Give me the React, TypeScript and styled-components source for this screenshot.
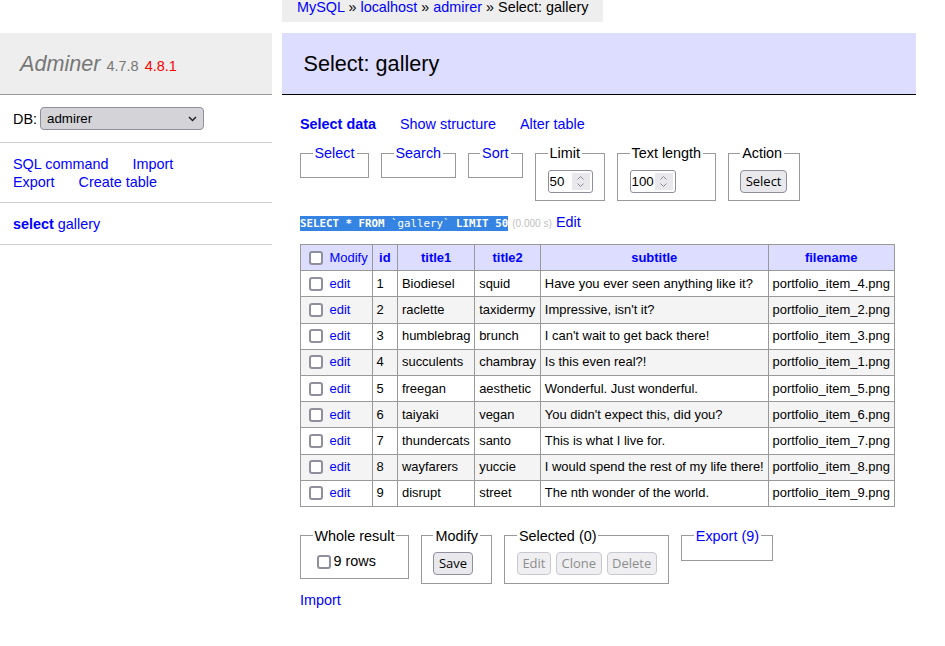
import React from "react";
import styled, { createGlobalStyle } from "styled-components";

const GlobalStyle = createGlobalStyle`
  body {
    margin: 0;
    background: #fff;
    color: #000;
    font: 14.4px/18px "Liberation Sans", Arial, Helvetica, sans-serif;
  }
  a {
    color: blue;
    text-decoration: none;
  }
`;

const Page = styled.div`
  display: flex;
  align-items: flex-start;
`;

const Menu = styled.nav`
  width: 272px;
  flex-shrink: 0;
  margin-top: 33px;
`;

const Logo = styled.h1`
  margin: 0;
  padding: 17px 20px;
  font-size: 21.6px;
  line-height: 27px;
  font-weight: normal;
  color: #777;
  background: #eee;
  border-bottom: 1px solid #999;
`;

const LogoName = styled.a`
  color: #777;
  font-style: italic;
`;

const Version = styled.span`
  font-size: 14.5px;
  line-height: 18px;
  color: #777;
`;

const NewVersion = styled.a`
  font-size: 14.5px;
  line-height: 18px;
  color: red;
`;

const MenuBlock = styled.div`
  padding: 11.5px 13px;
  border-bottom: 1px solid #ccc;
`;

const DbRow = styled(MenuBlock)`
  display: flex;
  align-items: center;
  gap: 3px;
  padding: 12px 13px 12px;
`;

const SelectBox = styled.div`
  box-sizing: border-box;
  width: 164px;
  height: 23px;
  padding: 1px 6px 0;
  display: flex;
  align-items: center;
  justify-content: space-between;
  border: 1px solid #8f8f9d;
  border-radius: 4px;
  background: #d3d3d8;
  font-size: 13.33px;
`;

const LinkLine = styled.div`
  display: flex;
  gap: 24px;
`;

const Strong = styled.a`
  font-weight: bold;
`;

const Main = styled.main`
  width: 634px;
  flex-shrink: 0;
  margin-left: 10px;
  padding-right: 20px;
  display: flex;
  flex-direction: column;
`;

const Breadcrumb = styled.div`
  align-self: flex-start;
  height: 22px;
  padding: 0 15px;
  line-height: 14px;
  background: #eee;
  white-space: nowrap;
`;

const Heading = styled.h2`
  margin: 11px 0 0;
  padding: 17px 21.6px;
  font-size: 21.6px;
  line-height: 27px;
  font-weight: normal;
  color: #000;
  background: #ddf;
  border-bottom: 1px solid #000;
`;

const Content = styled.div`
  padding: 20px 0 20px 18px;
`;

const Tabs = styled.p`
  margin: 0;
  display: flex;
  gap: 24px;
`;

const FieldRow = styled.div<{ $top: number }>`
  display: flex;
  align-items: flex-start;
  gap: 12px;
  margin-top: ${(p) => p.$top}px;
`;

const Fieldset = styled.fieldset`
  margin: 0;
  min-width: 0;
  padding: 7.5px 11.5px;
  border: 1px solid #999;
`;

const Legend = styled.legend`
  padding: 0 2px;
  line-height: 18px;
`;

const NumberField = styled.span<{ $width: number }>`
  box-sizing: border-box;
  display: inline-flex;
  width: ${(p) => p.$width}px;
  height: 23px;
  border: 1px solid #8f8f9d;
  border-radius: 3px;
  background: #fff;
  font-size: 13.33px;
  vertical-align: top;
`;

const NumberValue = styled.span`
  flex: 1;
  padding-left: 1px;
  line-height: 21px;
  overflow: hidden;
  white-space: nowrap;
`;

const Spinner = styled.span`
  width: 18px;
  margin: 2px 2px 2px 0;
  background: #e9e9ed;
  display: flex;
  flex-direction: column;
  align-items: center;
  justify-content: center;
  gap: 3px;
`;

const Button = styled.button`
  box-sizing: border-box;
  height: 23px;
  padding: 0 4.5px;
  border: 1px solid #8f8f9d;
  border-radius: 4px;
  background: #e9e9ed;
  color: #000;
  font: 13px/21px "Open Sans", sans-serif;

  &:disabled {
    border-color: #c8c8d0;
    background: #efeff1;
    color: #8d8d8d;
  }
`;

const ButtonGroup = styled.div`
  display: flex;
  gap: 5px;
`;

const SqlLine = styled.p`
  margin: 11.5px 0 0;
`;

const Query = styled.code`
  padding: 1px 0;
  background: #3584e4;
  color: #fff;
  font: 10.8px "DejaVu Sans Mono", monospace;
`;

const Time = styled.span`
  font-size: 10.08px;
  color: #c0c0c0;
`;

const Table = styled.table`
  margin-top: 11.5px;
  border-collapse: collapse;
  font-size: 12.96px;
  line-height: 20px;
  white-space: nowrap;

  td,
  th {
    border: 1px solid #999;
    padding: 2.6px 3.9px;
    text-align: left;
  }

  thead td,
  thead th {
    background: #ddf;
  }

  thead th {
    text-align: center;
    padding: 2.6px 6.5px;
  }

  tbody tr:nth-child(even) {
    background: #f4f4f4;
  }
`;

const Checkbox = styled.input.attrs({ type: "checkbox" })`
  appearance: none;
  box-sizing: border-box;
  width: 14px;
  height: 14px;
  margin: 0 3px 0 4px;
  border: 2px solid #8f8f9d;
  border-radius: 3px;
  background: #fff;
  vertical-align: -3px;
`;

const Footer = styled.p`
  margin: 7px 0 0;
`;

const Chevron = ({ up }: { up?: boolean }) => (
  <svg width="7" height="4" viewBox="0 0 7 4">
    <polyline
      points={up ? "0.5,3.5 3.5,0.5 6.5,3.5" : "0.5,0.5 3.5,3.5 6.5,0.5"}
      fill="none"
      stroke="#8a8a8a"
      strokeWidth="1"
    />
  </svg>
);

const rows = [
  ["1", "Biodiesel", "squid", "Have you ever seen anything like it?", "portfolio_item_4.png"],
  ["2", "raclette", "taxidermy", "Impressive, isn't it?", "portfolio_item_2.png"],
  ["3", "humblebrag", "brunch", "I can't wait to get back there!", "portfolio_item_3.png"],
  ["4", "succulents", "chambray", "Is this even real?!", "portfolio_item_1.png"],
  ["5", "freegan", "aesthetic", "Wonderful. Just wonderful.", "portfolio_item_5.png"],
  ["6", "taiyaki", "vegan", "You didn't expect this, did you?", "portfolio_item_6.png"],
  ["7", "thundercats", "santo", "This is what I live for.", "portfolio_item_7.png"],
  ["8", "wayfarers", "yuccie", "I would spend the rest of my life there!", "portfolio_item_8.png"],
  ["9", "disrupt", "street", "The nth wonder of the world.", "portfolio_item_9.png"],
];

const columns = ["id", "title1", "title2", "subtitle", "filename"];

const NumberInput = ({ value, width }: { value: string; width: number }) => (
  <NumberField $width={width}>
    <NumberValue>{value}</NumberValue>
    <Spinner>
      <Chevron up />
      <Chevron />
    </Spinner>
  </NumberField>
);

export default function App() {
  return (
    <>
      <GlobalStyle />
      <Page>
        <Menu>
          <Logo>
            <LogoName href="#">Adminer</LogoName> <Version>4.7.8</Version>{" "}
            <NewVersion href="#">4.8.1</NewVersion>
          </Logo>
          <DbRow>
            <span>DB:</span>
            <SelectBox>
              <span>admirer</span>
              <svg width="9" height="6" viewBox="0 0 9 6">
                <polyline points="1,1 4.5,4.5 8,1" fill="none" stroke="#222" strokeWidth="1.5" />
              </svg>
            </SelectBox>
          </DbRow>
          <MenuBlock>
            <LinkLine>
              <a href="#">SQL command</a>
              <a href="#">Import</a>
            </LinkLine>
            <LinkLine>
              <a href="#">Export</a>
              <a href="#">Create table</a>
            </LinkLine>
          </MenuBlock>
          <MenuBlock>
            <Strong href="#">select</Strong> <a href="#">gallery</a>
          </MenuBlock>
        </Menu>

        <Main>
          <Breadcrumb>
            <a href="#">MySQL</a> » <a href="#">localhost</a> » <a href="#">admirer</a> » Select:
            gallery
          </Breadcrumb>
          <Heading>Select: gallery</Heading>
          <Content>
            <Tabs>
              <Strong href="#">Select data</Strong>
              <a href="#">Show structure</a>
              <a href="#">Alter table</a>
            </Tabs>

            <FieldRow $top={11}>
              <Fieldset>
                <Legend>
                  <a href="#">Select</a>
                </Legend>
              </Fieldset>
              <Fieldset>
                <Legend>
                  <a href="#">Search</a>
                </Legend>
              </Fieldset>
              <Fieldset>
                <Legend>
                  <a href="#">Sort</a>
                </Legend>
              </Fieldset>
              <Fieldset>
                <Legend>Limit</Legend>
                <NumberInput value="50" width={45} />
              </Fieldset>
              <Fieldset>
                <Legend>Text length</Legend>
                <NumberInput value="100" width={46} />
              </Fieldset>
              <Fieldset>
                <Legend>Action</Legend>
                <Button>Select</Button>
              </Fieldset>
            </FieldRow>

            <SqlLine>
              <Query>
                <b>SELECT</b> <b>*</b> <b>FROM</b> `gallery` <b>LIMIT</b> <b>50</b>
              </Query>{" "}
              <Time>(0.000 s)</Time> <a href="#">Edit</a>
            </SqlLine>

            <Table>
              <thead>
                <tr>
                  <td>
                    <Checkbox /> <a href="#">Modify</a>
                  </td>
                  {columns.map((c) => (
                    <th key={c}>
                      <a href="#">{c}</a>
                    </th>
                  ))}
                </tr>
              </thead>
              <tbody>
                {rows.map((r) => (
                  <tr key={r[0]}>
                    <td>
                      <Checkbox /> <a href="#">edit</a>
                    </td>
                    {r.map((v, i) => (
                      <td key={i}>{v}</td>
                    ))}
                  </tr>
                ))}
              </tbody>
            </Table>

            <FieldRow $top={20}>
              <Fieldset>
                <Legend>Whole result</Legend>
                <label>
                  <Checkbox />9 rows
                </label>
              </Fieldset>
              <Fieldset>
                <Legend>Modify</Legend>
                <Button>Save</Button>
              </Fieldset>
              <Fieldset>
                <Legend>Selected (0)</Legend>
                <ButtonGroup>
                  <Button disabled>Edit</Button>
                  <Button disabled>Clone</Button>
                  <Button disabled>Delete</Button>
                </ButtonGroup>
              </Fieldset>
              <Fieldset>
                <Legend>
                  <a href="#">Export (9)</a>
                </Legend>
              </Fieldset>
            </FieldRow>

            <Footer>
              <a href="#">Import</a>
            </Footer>
          </Content>
        </Main>
      </Page>
    </>
  );
}
